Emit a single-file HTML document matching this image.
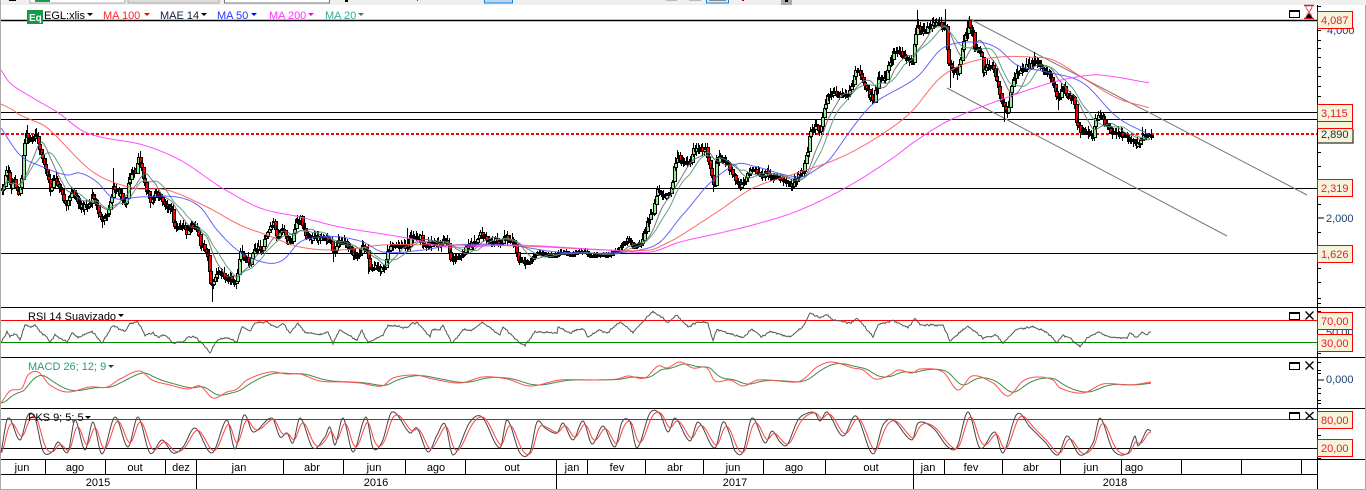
<!DOCTYPE html>
<html><head><meta charset="utf-8"><title>EGL:xlis</title>
<style>
html,body{margin:0;padding:0;background:#fff;width:1366px;height:490px;overflow:hidden}
svg{display:block;position:absolute;left:0;top:0}
text{font-family:"Liberation Sans",Arial,sans-serif;font-size:11px}
</style></head><body>
<svg id="s" width="1366" height="490" viewBox="0 0 1366 490" xmlns="http://www.w3.org/2000/svg">
<rect width="1366" height="490" fill="#fff"/>
<!-- top strip -->
<rect width="1366" height="5" fill="#efefef"/>
<rect x="9" width="7" height="1" fill="#000"/>
<rect x="30" y="-1" width="95" height="4" fill="#fff" stroke="#aaa"/>
<rect x="35" width="15" height="2" fill="#1a9a4a"/>
<rect x="128" y="-1" width="91" height="4" fill="#ddd" stroke="#aaa"/>
<rect x="224.500" y="-1" width="105" height="4" fill="#fff" stroke="#777"/>
<rect x="345" width="3" height="2" fill="#000"/>
<rect x="417" width="1" height="1" fill="#d00"/>
<rect x="484.500" y="-1" width="28" height="4" fill="#bcd8f0" stroke="#0a84e0"/>
<rect x="666" width="11" height="1" fill="#bbb"/>
<rect x="689" width="12" height="1" fill="#bbb"/>
<rect x="706.500" y="-1" width="22" height="4" fill="#e8e8e8" stroke="#0a84e0"/>
<rect x="709" width="17" height="1" fill="#888"/>
<rect x="742" width="2" height="1" fill="#a00"/>
<rect x="781" width="11" height="5" fill="#aaa"/>
<rect x="785" width="3" height="2" fill="#000"/>
<!-- frame -->
<rect x="0" y="0" width="1" height="490" fill="#aaa"/>
<rect x="1365" y="5" width="1" height="485" fill="#aaa"/>
<rect x="0" y="489" width="1366" height="1" fill="#aaa"/>
<!-- main horizontals -->
<rect x="1" y="19" width="1316" height="3" fill="#f5c518"/>
<rect x="1" y="20" width="1316" height="1" fill="#000"/>
<g stroke="#000" stroke-width="1" shape-rendering="crispEdges">
<line x1="1" x2="1317" y1="112.500" y2="112.500"/>
<line x1="1" x2="1317" y1="119.500" y2="119.500"/>
<line x1="1" x2="1317" y1="188.500" y2="188.500"/>
<line x1="1" x2="1317" y1="253.500" y2="253.500"/>
<line x1="1" x2="1365" y1="307.500" y2="307.500"/>
<line x1="1" x2="1365" y1="357.500" y2="357.500"/>
<line x1="1" x2="1365" y1="408.500" y2="408.500"/>
<line x1="1" x2="1365" y1="459.500" y2="459.500"/>
<line x1="1" x2="1317" y1="474.500" y2="474.500"/>
<line x1="1" x2="1317" y1="448.500" y2="448.500"/>
</g>
<line x1="1" x2="1317" y1="134" y2="134" stroke="#f00" stroke-width="2" stroke-dasharray="3 2"/>
<g stroke-width="1" shape-rendering="crispEdges">
<line x1="1" x2="1317" y1="320.500" y2="320.500" stroke="#f00"/>
<line x1="1" x2="1317" y1="342.500" y2="342.500" stroke="#080"/>
<line x1="1" x2="1317" y1="419.500" y2="419.500" stroke="#f00"/>
</g>
<!-- channel -->
<g stroke="#777" stroke-width="1" fill="none">
<line x1="968" y1="18" x2="1307" y2="195"/>
<line x1="947" y1="88" x2="1227" y2="236"/>
</g>
<g id="dyn"></g>
<!-- axis separators -->
<g stroke="#000" shape-rendering="crispEdges">
<path id="seps" d="" fill="none"/>
<line x1="1317.500" x2="1317.500" y1="5" y2="489"/>
</g>
<path id="ticks" d="" stroke="#000" fill="none" shape-rendering="crispEdges"/>
<!-- behind labels -->
<text x="1327" y="34" fill="#1a3f70">4,000</text>
<text x="1326" y="222" fill="#1a3f70">2,000</text>
<text x="1326" y="336" fill="#1a3f70">50,00</text>
<text x="1326" y="383" fill="#1a3f70">0,000</text>
<line x1="1318" x2="1324" y1="380" y2="380" stroke="#000"/>
<line x1="1318" x2="1324" y1="218" y2="218" stroke="#000"/>
<!-- boxes -->
<g fill="#f5f5dc" stroke="#f00" shape-rendering="crispEdges">
<rect x="1317.500" y="11.500" width="35" height="17"/>
<rect x="1317.500" y="110.500" width="35" height="18"/>
<rect x="1317.500" y="104.500" width="35" height="17"/>
<rect x="1317.500" y="179.500" width="35" height="17"/>
<rect x="1317.500" y="245.500" width="35" height="17"/>
<rect x="1317.500" y="312.500" width="35" height="17"/>
<rect x="1317.500" y="334.500" width="35" height="17"/>
<rect x="1317.500" y="411.500" width="35" height="17"/>
<rect x="1317.500" y="439.500" width="35" height="17"/>
</g>
<rect x="1318" y="129" width="35" height="14" fill="#f5f5dc"/>
<path d="M1353 129V143H1318" stroke="#000" fill="none" shape-rendering="crispEdges"/>
<g fill="#f01830">
<text x="1321" y="24">4,087</text>
<text x="1321" y="117">3,115</text>
<text x="1321" y="192">2,319</text>
<text x="1321" y="258">1,626</text>
<text x="1321" y="325">70,00</text>
<text x="1321" y="347">30,00</text>
<text x="1321" y="424">80,00</text>
<text x="1321" y="452">20,00</text>
</g>
<text x="1321" y="138" fill="#1a2a40">2,890</text>
<!-- legend -->
<rect x="27" y="10" width="16" height="14" fill="#129a48"/>
<text x="29" y="21" fill="#fff" style="font-weight:bold;font-size:10px">Eq</text>
<text x="44" y="19" fill="#000">EGL:xlis</text><path d="M87 13h6l-3 3z" fill="#000"/>
<text x="103" y="19" fill="#f22">MA 100</text><path d="M144 13h6l-3 3z" fill="#f00"/>
<text x="160" y="19" fill="#102040">MAE 14</text><path d="M201 13h6l-3 3z" fill="#000"/>
<text x="217" y="19" fill="#2233ff">MA 50</text><path d="M251 13h6l-3 3z" fill="#00f"/>
<text x="269" y="19" fill="#ff30ff">MA 200</text><path d="M308 13h6l-3 3z" fill="#f0f"/>
<text x="325" y="19" fill="#35a898">MA 20</text><path d="M358 13h6l-3 3z" fill="#2e8b57"/>
<text x="28" y="320" fill="#000">RSI 14 Suavizado</text><path d="M118 314h6l-3 3z" fill="#000"/>
<text x="28" y="370" fill="#2a9a80">MACD 26; 12; 9</text><path d="M108 365h6l-3 3z" fill="#060"/>
<text x="28" y="421" fill="#000">PKS 9; 5; 5</text><path d="M85 416h6l-3 3z" fill="#000"/>
<!-- icons -->
<g fill="none" stroke="#000" shape-rendering="crispEdges">
<path d="M1289.500 10.500h10v7h-10z M1289.500 11.500h10"/>
<path d="M1289.500 312.500h10v7h-10z M1289.500 313.500h10"/>
<path d="M1289.500 362.500h10v7h-10z M1289.500 363.500h10"/>
<path d="M1289.500 412.500h10v7h-10z M1289.500 413.500h10"/>
</g>
<g stroke="#000" stroke-width="1.300" fill="none">
<path d="M1305.500 311.500l8 8M1313.500 311.500l-8 8"/>
<path d="M1305.500 361.500l8 8M1313.500 361.500l-8 8"/>
<path d="M1305.500 412l8 7.500M1313.500 412l-8 7.500"/>
</g>
<path d="M1304 5.500h10M1304 18.500h10" stroke="#e02020" stroke-width="1.500"/>
<path d="M1306 6c0 4 2.500 4 2.500 6s-2.500 2-2.500 6M1312 6c0 4-2.500 4-2.500 6s2.500 2 2.500 6" stroke="#e06060" fill="none"/>
<path d="M1305.500 18l3.500-5 3.500 5z" fill="#000"/>
<!-- time axis text -->
<g fill="#000" text-anchor="middle">
<text x="22" y="471">jun</text><text x="75" y="471">ago</text><text x="135" y="471">out</text><text x="181" y="471">dez</text>
<text x="239" y="471">jan</text><text x="312" y="471">abr</text><text x="374" y="471">jun</text><text x="436" y="471">ago</text>
<text x="512" y="471">out</text><text x="572" y="471">jan</text><text x="617" y="471">fev</text><text x="675" y="471">abr</text>
<text x="733" y="471">jun</text><text x="794" y="471">ago</text><text x="871" y="471">out</text><text x="928" y="471">jan</text>
<text x="971" y="471">fev</text><text x="1031" y="471">abr</text><text x="1091" y="471">jun</text><text x="1134" y="471">ago</text>
<text x="98" y="486">2015</text><text x="376" y="486">2016</text><text x="735" y="486">2017</text><text x="1115" y="486">2018</text>
</g>
</svg>
<script>
(function(){
function P(s){return s.trim().split(/\s+/).map(function(p){var a=p.split(',');return [+a[0],+a[1]];});}
function I(pts,x){if(x<=pts[0][0])return pts[0][1];for(var i=1;i<pts.length;i++){if(x<=pts[i][0]){var a=pts[i-1],b=pts[i];return a[1]+(b[1]-a[1])*(x-a[0])/((b[0]-a[0])||1);}}return pts[pts.length-1][1];}
/* cubic Hermite spline through keypoints */
function H(pts,x){var n=pts.length;if(x<=pts[0][0])return pts[0][1];if(x>=pts[n-1][0])return pts[n-1][1];
 for(var i=1;i<n;i++){if(x<=pts[i][0]){var p0=pts[i-1],p1=pts[i],a=pts[Math.max(0,i-2)],b=pts[Math.min(n-1,i+1)];
  var h=p1[0]-p0[0],t=(x-p0[0])/h,m0=(p1[1]-a[1])/(p1[0]-a[0])*h,m1=(b[1]-p0[1])/(b[0]-p0[0])*h,t2=t*t,t3=t2*t;
  return (2*t3-3*t2+1)*p0[1]+(t3-2*t2+t)*m0+(-2*t3+3*t2)*p1[1]+(t3-t2)*m1;}}}
var seed=12345;function R(){seed=(seed*1103515245+12345)&0x7fffffff;return seed/0x7fffffff;}
var price=P("0,195 3,185 7,163 10,195 13,178 19,197 22,167 25,133 30,140 35,133 40,153 46,170 50,190 53,177 60,190 66,207 72,190 80,207 88,205 92,195 102,223 108,210 113,185 118,192 125,202 130,173 135,172 138,158 142,170 145,190 150,200 155,192 165,203 172,213 174,227 183,225 186,235 190,225 197,230 200,243 206,250 209,270 211,293 213,280 218,272 224,275 230,278 236,282 240,253 245,258 250,262 254,247 262,248 266,235 273,223 277,237 283,228 287,243 291,240 296,222 301,217 304,235 315,238 325,237 331,245 334,257 338,240 345,242 352,252 358,257 362,247 366,248 369,267 375,267 380,270 385,263 387,253 390,246 400,246 408,245 410,237 420,237 425,245 432,243 440,245 445,237 448,245 450,258 457,258 462,252 467,247 475,243 480,233 487,238 495,240 500,245 504,235 510,241 515,245 517,257 525,263 530,260 535,253 545,254 555,256 560,251 570,254 575,252 585,252 590,256 600,254 610,254 618,250 622,244 627,238 632,246 640,243 645,230 650,213 653,210 657,188 662,196 667,198 671,187 674,165 677,157 683,163 690,163 693,148 698,150 705,148 708,160 712,180 714,185 716,163 718,155 728,165 733,175 740,185 747,175 753,168 762,177 767,173 777,177 787,182 792,185 797,177 803,170 807,150 810,133 815,125 820,132 823,113 827,93 832,92 840,95 850,92 855,68 862,77 867,90 873,103 877,80 885,77 890,60 893,52 900,53 907,60 912,60 915,33 917,23 922,32 928,28 933,23 940,25 945,25 947,47 948,63 950,62 953,72 957,72 960,57 963,43 968,23 972,33 973,50 980,50 983,70 992,63 997,83 1000,98 1004,107 1007,115 1010,90 1013,77 1022,68 1030,65 1033,58 1040,68 1048,72 1053,83 1057,100 1063,87 1070,100 1073,98 1076,123 1080,130 1087,130 1092,138 1095,120 1098,115 1105,123 1110,132 1120,133 1128,138 1133,140 1138,145 1143,137 1151,135");
var mag=P("1,70 10,83 33,98 57,112 87,133 143,145 180,160 213,182 222,188 260,208 300,217 340,227 407,238 447,247 513,245 607,250 650,252 680,242 720,233 760,223 800,210 847,187 890,160 917,140 950,120 1000,100 1050,83 1077,77 1100,75 1150,83");
var red=P("1,104 13,110 20,115 43,125 53,133 93,172 133,188 167,190 207,207 240,225 267,235 300,247 340,250 383,245 440,245 520,246 607,250 650,250 667,243 680,236 720,210 753,188 797,173 837,159 873,140 910,113 940,78 967,63 1000,57 1030,57 1053,60 1083,78 1117,98 1150,108");
var blue=P("1,128 20,155 43,167 67,175 80,173 97,182 113,198 140,197 177,197 200,207 217,230 240,252 267,263 283,260 300,242 320,237 340,237 363,242 383,252 423,250 453,245 507,245 557,252 607,253 640,250 660,242 680,218 687,210 710,183 737,164 753,166 800,177 820,167 830,159 853,127 873,104 917,77 943,48 977,42 997,48 1017,65 1047,72 1083,83 1117,117 1150,135");
var spikes={27:125,113:168,138:153,102:228,211:302,333:262,407:228,368:274,677:150,693:143,712:192,917:10,933:17,945:9,968:20,1004:122,1142:127,1033:52,950:88,957:80,1057:110};
var dyn=document.getElementById('dyn');
function el(d,st,w,fill,op,parent){var p=document.createElementNS('http://www.w3.org/2000/svg','path');p.setAttribute('d',d);p.setAttribute('stroke',st||'none');p.setAttribute('fill',fill||'none');if(w)p.setAttribute('stroke-width',w);if(op)p.setAttribute('opacity',op);(parent||dyn).appendChild(p);return p;}
var g1=document.createElementNS('http://www.w3.org/2000/svg','g');
g1.setAttribute('shape-rendering','crispEdges');dyn.appendChild(g1);
var prev=I(price,2),sk={};
for(var k in spikes)sk[Math.round(k/1.5)]=spikes[k];
for(var i=1;i*1.5<=1151;i++){
  var x=Math.round(i*1.5),base=I(price,x),flat=(base>240&&base<262&&x>520&&x<640),amp=flat?1:2.6;
  var c=base+(R()-0.5)*amp*2,o=prev+(R()-0.5)*amp*.6;
  var t=Math.min(o,c),b=Math.max(o,c);
  var hi=t-R()*(flat?2:5)-1,lo=b+R()*(flat?2:5)-(-1);
  if(sk[i]!==undefined){if(sk[i]<t)hi=sk[i];else lo=sk[i];}
  var ty=Math.round(t),by=Math.max(Math.round(b),ty+2);
  var dk='M'+x+' '+Math.round(hi)+'h1V'+Math.round(lo)+'h-1z';
  dk+='M'+(x-1)+' '+ty+'h4V'+(by+1)+'h-4z';
  el(dk,null,0,'#000',null,g1);
  if(by-ty>=3){el('M'+x+' '+(ty+1)+'h2V'+by+'h-2z',null,0,c<o?'#90ee90':'#f00',null,g1);}
  prev=c;
}
function MA(win){var d='';for(var x=2;x<=1151;x+=2){var s=0,n=0;for(var j=x;j>x-win&&j>=0;j-=2){s+=I(price,j);n++;}d+=(x==2?'M':'L')+x+' '+(s/n).toFixed(1);}return d;}
function sp(pts){var d='',a=pts[0][0],b=pts[pts.length-1][0];for(var x=a;x<=b;x+=2)d+=(x==a?'M':'L')+x+' '+H(pts,x).toFixed(1);return d;}
el(MA(20),'#6a6a6a',1,null,.9);
el(MA(29),'#4f9a78',1,null,.9);
el(sp(blue),'#4a4aff',1,null,.85);
el(sp(red),'#ff5a5a',1,null,.9);
el(sp(mag),'#ff44ff',1,null,.95);
/* oscillators */
function dense(pts,noise,spline){var o=[];for(var x=1;x<=1151;x+=1){o.push([x,spline?H(pts,x):I(pts,x)]);}
 if(noise){for(var i=0;i<o.length;i+=1){if(i%2==0)o[i][1]+=(R()-.5)*noise;}}return o;}
function lag(o,a){var r=[],v=o[0][1];for(var i=0;i<o.length;i++){v=v+(o[i][1]-v)*a;r.push([o[i][0],v]);}return r;}
function pd(o){var d='';for(var i=0;i<o.length;i+=1)d+=(i?'L':'M')+o[i][0]+' '+o[i][1].toFixed(1);return d;}
var rsi=P("1,343 7,332 10,337 15,333 20,340 25,325 30,327 35,325 40,332 45,335 50,342 55,335 67,342 72,333 78,338 92,331 102,343 113,325 125,332 130,323 138,322 145,335 153,333 158,337 165,335 173,343 183,342 188,337 195,337 202,343 210,353 217,340 227,338 237,342 242,327 250,331 255,323 267,322 277,328 283,323 290,333 298,323 305,332 320,335 328,332 333,343 340,330 357,340 362,330 368,343 383,335 388,325 407,328 412,323 418,323 430,337 432,330 440,330 443,325 452,343 463,330 473,330 482,322 490,328 500,335 503,327 520,343 525,345 535,332 557,333 558,327 570,333 583,328 588,337 600,330 607,333 620,322 633,332 647,317 653,312 662,317 667,323 677,315 688,327 697,322 708,323 713,341 717,329 730,334 743,338 752,329 762,337 770,331 790,337 803,327 810,313 820,318 827,314 833,320 850,323 857,318 873,337 878,325 893,320 908,328 915,318 920,325 943,325 950,341 968,326 983,338 997,335 1003,343 1017,329 1033,327 1047,332 1057,343 1063,335 1070,338 1080,347 1087,338 1098,332 1110,337 1127,338 1130,333 1137,338 1142,332 1147,335 1151,331");
el(pd(dense(rsi,2.4,false)),'#555',1);
var macd=P("1,403 10,391 22,388 28,375 38,372 50,385 67,392 90,387 107,387 120,379 140,371 152,380 170,385 188,389 200,386 213,398 227,392 237,389 247,380 270,372 287,374 300,374 320,381 343,382 360,383 382,386 393,378 415,375 433,379 460,383 483,377 507,379 530,386 560,380 593,380 617,379 628,376 645,378 658,366 667,368 680,362 693,368 707,368 715,381 730,380 743,386 758,380 797,382 805,378 817,367 832,362 853,368 863,370 875,379 890,375 898,370 912,373 920,369 943,372 958,390 972,376 993,383 1008,396 1023,381 1037,377 1053,380 1060,388 1083,393 1103,384 1130,385 1151,382");
var mr=dense(macd,0,true);
el(pd(lag(mr,.11)),'#3f8a4f',1);
el(pd(mr),'#ff5050',1);
var pks=P("1,453 8,418 20,440 28,415 35,418 43,451 52,452 58,442 68,452 75,420 85,450 93,422 102,454 115,417 128,447 138,417 150,453 162,440 173,453 183,447 195,428 212,453 227,420 235,449 244,415 253,432 272,418 280,437 287,433 293,443 300,418 313,448 325,437 330,427 335,445 343,418 353,452 366,417 373,448 382,442 392,412 410,433 417,428 428,452 437,435 445,424 453,455 470,422 482,417 500,448 507,420 520,453 530,452 537,422 545,428 557,433 563,423 573,440 583,421 592,444 603,426 615,447 622,422 630,422 637,448 650,413 660,414 668,432 675,418 690,441 698,422 715,448 723,422 730,435 735,451 743,452 752,418 765,443 772,431 780,442 787,445 798,420 808,413 815,413 820,421 827,412 843,436 856,416 873,454 883,425 893,420 912,440 918,423 933,428 948,447 957,447 968,412 980,448 995,432 1003,453 1017,414 1030,427 1045,442 1058,455 1067,436 1080,455 1093,443 1100,418 1113,450 1128,453 1135,436 1138,446 1147,430 1151,431");
var pb=dense(pks,0,true);
el(pd(pb),'#444',1);
el(pd(lag(pb,.24)),'#ff4040',1);
/* separators */
var d='';[45,105,165,196,283,343,405,465,556,587,645,703,763,825,913,944,1002,1060,1121,1181,1241,1301].forEach(function(x){d+='M'+(x+.5)+' 460V474';});
[196,556,913].forEach(function(x){d+='M'+(x+.5)+' 475V489';});
document.getElementById('seps').setAttribute('d',d);
/* ticks */
var t='';[6,12,30,40,48,57,67,76,86,96,105,128,152,166,180,204,232,268,282,298,303,311,316,329,345,353,362,370,373,388,393,400,403,411,435,458].forEach(function(y){t+='M1318 '+(y+.5)+'h3';});
document.getElementById('ticks').setAttribute('d',t);
})();
</script>
</body></html>
